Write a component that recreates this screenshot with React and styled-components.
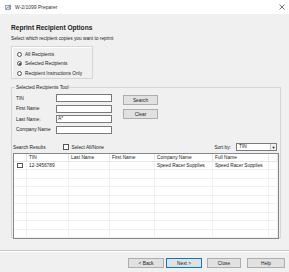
import React from 'react';
import styled, { createGlobalStyle } from 'styled-components';

const GlobalStyle = createGlobalStyle`
  html, body {
    margin: 0;
    padding: 0;
    background: #f0f0f0;
  }
  body {
    font-family: 'Liberation Sans', Arial, sans-serif;
    color: #1a1a1a;
  }
  * {
    box-sizing: border-box;
  }
`;

const Window = styled.div`
  width: 289px;
  height: 272px;
  display: flex;
  flex-direction: column;
  background: #f0f0f0;
  overflow: hidden;
`;

const TitleBar = styled.div`
  height: 14px;
  flex: none;
  display: flex;
  align-items: center;
  gap: 3px;
  padding: 0 4px 0 5px;
  background: #ffffff;
  font-size: 5px;
  color: #333;
`;

const TitleText = styled.span`
  flex: 1;
`;

const Content = styled.div`
  display: flex;
  flex-direction: column;
  padding: 0 8px 0 11px;
`;

const Heading = styled.div`
  margin-top: 10px;
  font-size: 6.6px;
  font-weight: bold;
  line-height: 8px;
  color: #222;
`;

const SubText = styled.div`
  margin-top: 4px;
  font-size: 4.8px;
  line-height: 6px;
`;

const RadioBox = styled.div`
  margin-top: 4px;
  width: 82px;
  height: 33px;
  border: 1px solid #d5d5d5;
  box-shadow: inset 1px 1px 0 #fff;
  padding: 3px 0 0 5px;
  display: flex;
  flex-direction: column;
`;

const RadioRow = styled.label`
  height: 9.5px;
  display: flex;
  align-items: center;
  gap: 3px;
  font-size: 4.8px;
`;

const RadioCircle = styled.span`
  width: 5px;
  height: 5px;
  border-radius: 50%;
  border: 1px solid #555;
  background: #fff;
  display: flex;
  align-items: center;
  justify-content: center;
  &::after {
    content: '';
    width: 2px;
    height: 2px;
    border-radius: 50%;
    background: ${(p) => (p.checked ? '#222' : 'transparent')};
  }
`;

const ToolGroup = styled.fieldset`
  margin: 5px 0 0 0;
  padding: 3px 1px 2px 1px;
  width: 270px;
  height: 154px;
  border: 1px solid #d5d5d5;
  display: flex;
  flex-direction: column;
`;

const Legend = styled.legend`
  margin-left: 2px;
  padding: 0 1px;
  font-size: 4.8px;
  line-height: 7px;
`;

const FormArea = styled.div`
  display: flex;
  gap: 11px;
  padding-left: 3px;
`;

const FieldGrid = styled.div`
  display: grid;
  grid-template-columns: 40px 56px;
  row-gap: 2.5px;
  align-items: center;
`;

const FieldLabel = styled.span`
  font-size: 4.8px;
`;

const TextInput = styled.div`
  height: 8px;
  background: #fff;
  border: 1px solid #7a7a7a;
  font-size: 4.8px;
  line-height: 6px;
  padding-left: 1px;
`;

const SideButtons = styled.div`
  display: flex;
  flex-direction: column;
  gap: 4px;
  padding-top: 1px;
`;

const Button = styled.div`
  width: ${(p) => p.w || 35}px;
  height: ${(p) => p.h || 10}px;
  margin-left: ${(p) => p.ml || 0}px;
  display: flex;
  align-items: center;
  justify-content: center;
  background: #e1e1e1;
  border: 1px solid ${(p) => (p.primary ? '#0078d7' : '#adadad')};
  font-size: 4.8px;
  color: #1a1a1a;
`;

const ResultsBar = styled.div`
  margin-top: 9px;
  height: 9px;
  display: flex;
  align-items: center;
  font-size: 4.8px;
`;

const ResultsLabel = styled.span`
  width: 50px;
`;

const CheckBox = styled.span`
  width: 5.5px;
  height: 5.5px;
  border: 1px solid #555;
  background: #fff;
  flex: none;
`;

const SelectAll = styled.span`
  margin-left: 3px;
  flex: 1;
`;

const SortLabel = styled.span`
  margin-right: 5px;
`;

const Combo = styled.div`
  width: 41px;
  height: 8px;
  display: flex;
  background: #fff;
  border: 1px solid #7a7a7a;
  margin-right: 2px;
`;

const ComboText = styled.span`
  flex: 1;
  padding-left: 2px;
  line-height: 6px;
`;

const ComboArrow = styled.span`
  width: 6px;
  display: flex;
  align-items: center;
  justify-content: center;
  background: #f0f0f0;
  border-left: 1px solid #c8c8c8;
  font-size: 4px;
`;

const ListView = styled.div`
  margin-top: 1px;
  flex: 1;
  border: 1px solid #828790;
  background: #fff;
  overflow: hidden;
`;

const Row = styled.div`
  display: flex;
  height: ${(p) => (p.header ? 8 : 8.5)}px;
  border-bottom: 1px solid ${(p) => (p.header ? '#e5e5e5' : '#f0f0f0')};
`;

const Cell = styled.div`
  width: ${(p) => p.w}px;
  flex: ${(p) => (p.grow ? 1 : 'none')};
  display: flex;
  align-items: center;
  padding-left: ${(p) => p.pl ?? 2}px;
  border-right: 1px solid ${(p) => (p.header ? '#e5e5e5' : '#f0f0f0')};
  font-size: 4.8px;
  white-space: nowrap;
  overflow: hidden;
`;

const Separator = styled.div`
  margin-top: 12px;
  height: 2px;
  border-top: 1px solid #c8c8c8;
  border-bottom: 1px solid #fff;
`;

const ButtonRow = styled.div`
  margin-top: 6px;
  display: flex;
  padding-left: 128px;
`;

const columns = [
  { key: 'chk', title: '', w: 13 },
  { key: 'tin', title: 'TIN', w: 42 },
  { key: 'last', title: 'Last Name', w: 41 },
  { key: 'first', title: 'First Name', w: 45 },
  { key: 'company', title: 'Company Name', w: 58 },
  { key: 'full', title: 'Full Name', w: 56 },
];

const rows = [
  { tin: '12-3456789', last: '', first: '', company: 'Speed Racer Supplies', full: 'Speed Racer Supplies' },
  ...Array.from({ length: 8 }, () => ({})),
];

const AppIcon = () => (
  <svg width="7" height="7" viewBox="0 0 7 7">
    <rect x="0.5" y="1.5" width="5" height="4" fill="#dfe6ee" stroke="#6b7c8f" strokeWidth="0.6" />
    <circle cx="4.8" cy="2" r="1.2" fill="#7d8fa3" />
    <path d="M1 5 L2.8 3.2 L4 4.4 L5 3.6 L5.8 5" fill="none" stroke="#5a6c80" strokeWidth="0.6" />
  </svg>
);

const CloseIcon = () => (
  <svg width="6" height="6" viewBox="0 0 6 6">
    <path d="M0.5 0.5 L5.5 5.5 M5.5 0.5 L0.5 5.5" stroke="#333" strokeWidth="0.7" />
  </svg>
);

const fields = [
  { label: 'TIN', value: '' },
  { label: 'First Name', value: '' },
  { label: 'Last Name:', value: 'A*' },
  { label: 'Company Name', value: '' },
];

export default function App() {
  return (
    <>
      <GlobalStyle />
      <Window>
        <TitleBar>
          <AppIcon />
          <TitleText>W-2/1099 Preparer</TitleText>
          <CloseIcon />
        </TitleBar>
        <Content>
          <Heading>Reprint Recipient Options</Heading>
          <SubText>Select which recipient copies you want to reprint</SubText>
          <RadioBox>
            <RadioRow><RadioCircle />All Recipients</RadioRow>
            <RadioRow><RadioCircle checked />Selected Recipients</RadioRow>
            <RadioRow><RadioCircle />Recipient Instructions Only</RadioRow>
          </RadioBox>
          <ToolGroup>
            <Legend>Selected Recipients Tool</Legend>
            <FormArea>
              <FieldGrid>
                {fields.map((f) => (
                  <React.Fragment key={f.label}>
                    <FieldLabel>{f.label}</FieldLabel>
                    <TextInput>{f.value}</TextInput>
                  </React.Fragment>
                ))}
              </FieldGrid>
              <SideButtons>
                <Button>Search</Button>
                <Button>Clear</Button>
              </SideButtons>
            </FormArea>
            <ResultsBar>
              <ResultsLabel>Search Results</ResultsLabel>
              <CheckBox />
              <SelectAll>Select All/None</SelectAll>
              <SortLabel>Sort by:</SortLabel>
              <Combo>
                <ComboText>TIN</ComboText>
                <ComboArrow>▼</ComboArrow>
              </Combo>
            </ResultsBar>
            <ListView>
              <Row header>
                {columns.map((c) => (
                  <Cell key={c.key} w={c.w} header>{c.title}</Cell>
                ))}
                <Cell grow header />
              </Row>
              {rows.map((r, i) => (
                <Row key={i}>
                  <Cell w={13} pl={3}>{i === 0 && <CheckBox />}</Cell>
                  {columns.slice(1).map((c) => (
                    <Cell key={c.key} w={c.w}>{r[c.key]}</Cell>
                  ))}
                  <Cell grow />
                </Row>
              ))}
            </ListView>
          </ToolGroup>
        </Content>
        <Separator />
        <ButtonRow>
          <Button w={36}>&lt; Back</Button>
          <Button w={36} ml={2} primary>Next &gt;</Button>
          <Button w={34} ml={5}>Close</Button>
          <Button w={38} ml={6}>Help</Button>
        </ButtonRow>
      </Window>
    </>
  );
}
